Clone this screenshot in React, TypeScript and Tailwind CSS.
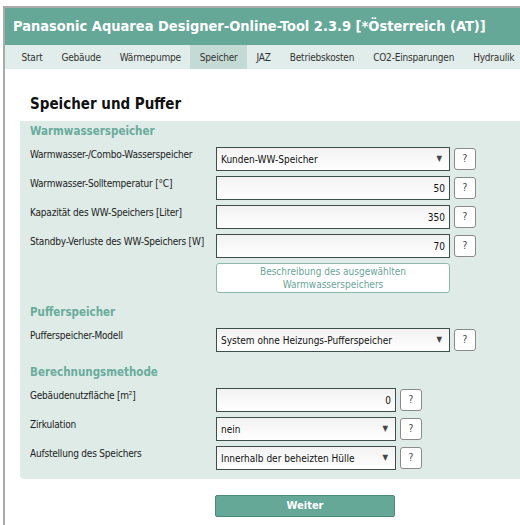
import { ReactNode } from "react";

const navItems = [
  "Start",
  "Gebäude",
  "Wärmepumpe",
  "Speicher",
  "JAZ",
  "Betriebskosten",
  "CO2-Einsparungen",
  "Hydraulik",
];

const Help = () => (
  <button className="w-[22px] h-[22px] ml-1 bg-white border border-[#8a8a8a] rounded-[3px] text-[10px] text-[#444] leading-none">
    ?
  </button>
);

const Field = ({
  value,
  select,
  wide = true,
}: {
  value: string;
  select?: boolean;
  wide?: boolean;
}) => (
  <div
    className={`${wide ? "w-[234px]" : "w-[180px]"} h-[24px] border border-[#3f4d4d] bg-gradient-to-b from-[#f2f2f2] to-white flex items-center px-[4px] text-[10px] text-[#111] ${
      select ? "justify-between" : "justify-end"
    }`}
  >
    <span>{value}</span>
    {select && <span className="text-[8px] text-[#444] mr-[3px]">▼</span>}
  </div>
);

const Row = ({ label, children }: { label: string; children: ReactNode }) => (
  <div className="flex items-start mb-[5px]">
    <div className="w-[186px] pt-[1px] text-[10px] leading-[13px] text-[#222] whitespace-nowrap tracking-[-0.2px]">
      {label}
    </div>
    <div className="flex items-center">{children}</div>
  </div>
);

const SectionTitle = ({ children }: { children: ReactNode }) => (
  <div className="h-[16px] leading-[16px] text-[11.5px] font-bold text-[#6aab9c] mb-[8px]">
    {children}
  </div>
);

export default function App() {
  return (
    <div className="w-[520px] h-[525px] overflow-hidden bg-white pt-[6px] pl-[3px] font-['DejaVu_Sans_Condensed','DejaVu_Sans',sans-serif]">
      <div className="h-full border-t-2 border-l-2 border-[#ababab]">
        <div className="h-[37px] bg-[#65a898] flex items-center pl-[8px]">
          <h1 className="text-[14.5px] font-bold text-white whitespace-nowrap">
            Panasonic Aquarea Designer-Online-Tool 2.3.9 [*Österreich (AT)]
          </h1>
        </div>
        <nav className="h-[24px] bg-[#e1edea] flex pl-[7px] text-[10px] text-[#333] whitespace-nowrap tracking-[-0.2px]">
          {navItems.map((item) => (
            <div
              key={item}
              className={`px-[9.5px] flex items-center ${
                item === "Speicher" ? "bg-[#c4dbd5]" : ""
              }`}
            >
              {item}
            </div>
          ))}
        </nav>

        <div className="pl-[15px] pt-[25px]">
          <h2 className="h-[20px] leading-[20px] text-[15px] font-bold text-[#111] pl-[10px] mb-[7px]">
            Speicher und Puffer
          </h2>

          <div className="bg-[#deebe7] rounded-bl-[4px] pl-[10px] pt-[2px] pb-[4px] w-[520px]">
            <SectionTitle>Warmwasserspeicher</SectionTitle>
            <Row label="Warmwasser-/Combo-Wasserspeicher">
              <Field value="Kunden-WW-Speicher" select />
              <Help />
            </Row>
            <Row label="Warmwasser-Solltemperatur [°C]">
              <Field value="50" />
              <Help />
            </Row>
            <Row label="Kapazität des WW-Speichers [Liter]">
              <Field value="350" />
              <Help />
            </Row>
            <Row label="Standby-Verluste des WW-Speichers [W]">
              <Field value="70" />
              <Help />
            </Row>
            <div className="flex mb-[11px]">
              <div className="w-[186px]" />
              <button className="w-[234px] h-[30px] bg-white border border-[#8fb8ad] rounded-[3px] text-[10px] leading-[13px] text-[#6aa597]">
                Beschreibung des ausgewählten
                <br />
                Warmwasserspeichers
              </button>
            </div>

            <SectionTitle>Pufferspeicher</SectionTitle>
            <Row label="Pufferspeicher-Modell">
              <Field value="System ohne Heizungs-Pufferspeicher" select />
              <Help />
            </Row>
            <div className="h-[7px]" />

            <SectionTitle>Berechnungsmethode</SectionTitle>
            <Row label="Gebäudenutzfläche [m²]">
              <Field value="0" wide={false} />
              <Help />
            </Row>
            <Row label="Zirkulation">
              <Field value="nein" select wide={false} />
              <Help />
            </Row>
            <Row label="Aufstellung des Speichers">
              <Field value="Innerhalb der beheizten Hülle" select wide={false} />
              <Help />
            </Row>
          </div>

          <div className="flex pt-[16px]">
            <div className="w-[195px]" />
            <button className="w-[180px] h-[22px] bg-[#65a898] border border-[#4d8a7c] rounded-[2px] text-white font-bold text-[11px]">
              Weiter
            </button>
          </div>
        </div>
      </div>
    </div>
  );
}
